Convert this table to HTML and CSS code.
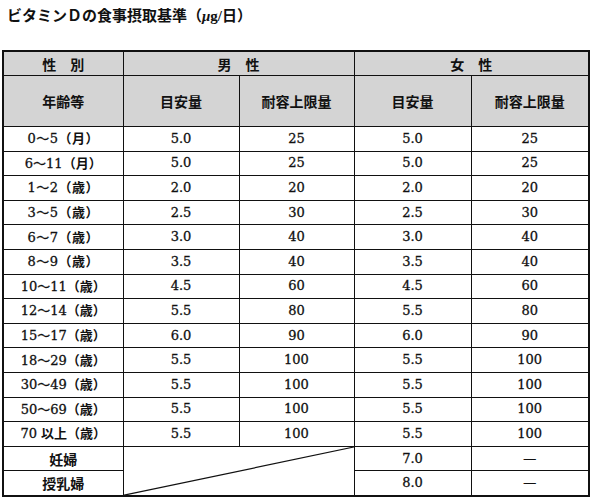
FILE: index.html
```html
<!DOCTYPE html>
<html lang="ja">
<head>
<meta charset="utf-8">
<link rel="stylesheet" href="styles.css">
</head>
<body>
<div class="page">
  <h1 class="title">ビタミンＤの食事摂取基準（<i class="mu">μ</i>g/日）</h1>
  <table class="tbl">
    <colgroup>
      <col class="c1"><col class="c2"><col class="c3"><col class="c4"><col class="c5">
    </colgroup>
    <thead>
      <tr class="h1">
        <th>性　別</th>
        <th colspan="2">男　性</th>
        <th colspan="2">女　性</th>
      </tr>
      <tr class="h2">
        <th>年齢等</th>
        <th>目安量</th>
        <th>耐容上限量</th>
        <th>目安量</th>
        <th>耐容上限量</th>
      </tr>
    </thead>
    <tbody>
      <tr><td class="age sp">0～5<span class="k">（月）</span></td><td>5.0</td><td>25</td><td>5.0</td><td>25</td></tr>
      <tr><td class="age">6～11<span class="k">（月）</span></td><td>5.0</td><td>25</td><td>5.0</td><td>25</td></tr>
      <tr><td class="age sp">1～2<span class="k">（歳）</span></td><td>2.0</td><td>20</td><td>2.0</td><td>20</td></tr>
      <tr><td class="age sp">3～5<span class="k">（歳）</span></td><td>2.5</td><td>30</td><td>2.5</td><td>30</td></tr>
      <tr><td class="age sp">6～7<span class="k">（歳）</span></td><td>3.0</td><td>40</td><td>3.0</td><td>40</td></tr>
      <tr><td class="age sp">8～9<span class="k">（歳）</span></td><td>3.5</td><td>40</td><td>3.5</td><td>40</td></tr>
      <tr><td class="age">10～11<span class="k">（歳）</span></td><td>4.5</td><td>60</td><td>4.5</td><td>60</td></tr>
      <tr><td class="age">12～14<span class="k">（歳）</span></td><td>5.5</td><td>80</td><td>5.5</td><td>80</td></tr>
      <tr><td class="age">15～17<span class="k">（歳）</span></td><td>6.0</td><td>90</td><td>6.0</td><td>90</td></tr>
      <tr><td class="age">18～29<span class="k">（歳）</span></td><td>5.5</td><td>100</td><td>5.5</td><td>100</td></tr>
      <tr><td class="age">30～49<span class="k">（歳）</span></td><td>5.5</td><td>100</td><td>5.5</td><td>100</td></tr>
      <tr><td class="age">50～69<span class="k">（歳）</span></td><td>5.5</td><td>100</td><td>5.5</td><td>100</td></tr>
      <tr><td class="age">70 <span class="k">以上（歳）</span></td><td>5.5</td><td>100</td><td>5.5</td><td>100</td></tr>
      <tr>
        <td class="age jp">妊婦</td>
        <td class="diag" colspan="2" rowspan="2">
          <svg class="diag-line" viewBox="0 0 100 100" preserveAspectRatio="none"><line x1="0" y1="100" x2="100" y2="0" stroke="#111" stroke-width="1.2" vector-effect="non-scaling-stroke"/></svg>
        </td>
        <td>7.0</td><td>—</td>
      </tr>
      <tr><td class="age jp">授乳婦</td><td>8.0</td><td>—</td></tr>
    </tbody>
  </table>
</div>
</body>
</html>
```

FILE: styles.css
```css
html, body {
  margin: 0;
  padding: 0;
  background: #fff;
}
.page {
  padding: 6px 4px 0 2px;
  font-family: "Liberation Serif", "Noto Sans CJK JP", serif;
  color: #111;
}
.title {
  margin: 0 0 0 5px;
  font-size: 15px;
  line-height: 20px;
  font-weight: 700;
  height: 44px;
}
.mu {
  font-style: italic;
}
.tbl {
  border-collapse: collapse;
  table-layout: fixed;
  width: 586px;
  border: 2px solid #111;
  font-family: "DejaVu Serif", "Noto Sans CJK JP", serif;
  font-size: 13px;
  font-weight: 400;
}
.c1 { width: 120px; }
.c2 { width: 116px; }
.c3 { width: 115px; }
.c4 { width: 117px; }
.c5 { width: 118px; }
.tbl th, .tbl td {
  border: 1px solid #111;
  padding: 0;
  text-align: center;
  vertical-align: middle;
  line-height: 18px;
}
.tbl td {
  height: 23.6px;
  -webkit-text-stroke: 0.3px #111;
}
.tbl th {
  background: #d4d4d4;
  font-family: "Noto Sans CJK JP", sans-serif;
  font-size: 14px;
  font-weight: 700;
}
.h1 th { height: 23px; }
.h2 th { height: 50px; }
.age {
  font-family: "DejaVu Serif", "Noto Sans CJK JP", serif;
}
.k {
  font-family: "Noto Sans CJK JP", sans-serif;
  font-weight: 700;
  -webkit-text-stroke: 0;
}
.jp {
  font-family: "Noto Sans CJK JP", sans-serif;
  font-weight: 700;
  font-size: 14px;
}
.tbl td.jp {
  -webkit-text-stroke: 0;
}
.sp {
  letter-spacing: 0.5px;
}
.diag {
  position: relative;
}
.diag-line {
  position: absolute;
  left: 0;
  top: 0;
  width: 100%;
  height: 100%;
  display: block;
}
```
